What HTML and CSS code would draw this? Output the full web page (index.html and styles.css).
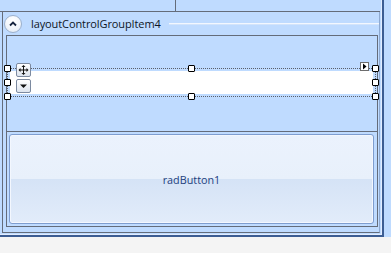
FILE: index.html
```html
<!DOCTYPE html>
<html>
<head>
<meta charset="utf-8">
<link rel="stylesheet" href="styles.css">
</head>
<body>
<div class="form">
  <div class="frame">
    <div class="toprow"><div class="topcell"></div><div class="topcell2"></div></div>
    <div class="root">
      <div class="ghead">
        <div class="collapse">
          <svg width="16" height="16" viewBox="0 0 16 16"><path d="M5 9.5 L8 6.5 L11 9.5" fill="none" stroke="#15243f" stroke-width="1.8"/></svg>
        </div>
        <span class="gtitle">layoutControlGroupItem4</span>
        <div class="gline"></div>
      </div>
      <div class="gbox">
        <div class="sp1"></div>
        <div class="sel">
          <div class="tb"></div>
          <div class="tool move">
            <svg width="13" height="12" viewBox="0 0 13 12"><path d="M6.5 1 L4.5 3 H6 V5.5 H3.5 V4 L1.5 6 L3.5 8 V6.5 H6 V9 H4.5 L6.5 11 L8.5 9 H7 V6.5 H9.5 V8 L11.5 6 L9.5 4 V5.5 H7 V3 H8.5 Z" fill="#111"/></svg>
          </div>
          <div class="tool drop">
            <svg width="13" height="12" viewBox="0 0 13 12"><path d="M3 4.5 H10 L6.5 8 Z" fill="#111"/></svg>
          </div>
          <div class="stag"><svg width="7" height="7" viewBox="0 0 7 7"><path d="M2 0.5 L5.5 3.5 L2 6.5 Z" fill="#000"/></svg></div>
          <div class="h h1"></div><div class="h h2"></div><div class="h h3"></div>
          <div class="h h4"></div><div class="h h5"></div>
          <div class="h h6"></div><div class="h h7"></div><div class="h h8"></div>
        </div>
        <div class="sp2"></div>
        <div class="bitem">
          <div class="btn">radButton1</div>
        </div>
      </div>
    </div>
  </div>
</div>
</body>
</html>
```
FILE: styles.css
```css
html, body {
  margin: 0;
  padding: 0;
}
body {
  background: #f4f4f4;
  width: 391px;
  height: 253px;
  overflow: hidden;
  font-family: "Open Sans", "Noto Sans", sans-serif;
}
.form {
  width: 391px;
  height: 237px;
  background: #bfdbff;
}
.frame {
  width: 382px;
  height: 235px;
  border-right: 2px solid #3c5d93;
  border-bottom: 2px solid #3c5d93;
  box-shadow: inset -1px -1px 0 #e2edff;
}
.toprow {
  display: flex;
  width: 380px;
  height: 11px;
  border-bottom: 1px solid #646c7a;
}
.topcell {
  width: 175px;
  border-right: 1px solid #646c7a;
}
.root {
  margin-left: 2px;
  width: 376px;
  height: 220px;
  border-left: 1px solid #646c7a;
  border-right: 1px solid #8ea9d0;
  border-bottom: 1px solid #646c7a;
}
.ghead {
  display: flex;
  align-items: center;
  height: 23px;
}
.collapse {
  width: 16px;
  height: 16px;
  margin-left: 1px;
  border-radius: 50%;
  border: 1px solid #9cb0cc;
  background: radial-gradient(circle at 50% 30%, #ffffff 0%, #f3f7fc 50%, #dfe7f2 100%);
  display: flex;
  align-items: center;
  justify-content: center;
}
.collapse svg {
  display: block;
  width: 16px;
  height: 16px;
}
.gtitle {
  margin-left: 9px;
  font-size: 11px;
  letter-spacing: -0.1px;
  color: #0e1626;
  line-height: 14px;
  white-space: nowrap;
}
.gline {
  flex: 1;
  margin-left: 8px;
  height: 0;
  border-top: 1px solid #f2f7ff;
  border-bottom: 1px solid #d3e4fb;
}
.gbox {
  margin-left: 3px;
  width: 370px;
  height: 190px;
  border: 1px solid #646c7a;
}
.sp1 {
  height: 32px;
}
.sel {
  position: relative;
  width: 367px;
  height: 27px;
  border: 1px dotted #5a5f6a;
  padding: 0;
}
.tb {
  margin: 2px 2px 0 2px;
  height: 23px;
  background: #ffffff;
}
.tool {
  position: absolute;
  left: 8px;
  width: 13px;
  height: 12px;
  border: 1px solid #7c8aa0;
  border-radius: 2px;
  background: linear-gradient(#ffffff, #dde4ee);
}
.tool svg {
  display: block;
}
.move {
  top: -6px;
}
.drop {
  top: 10px;
}
.stag {
  position: absolute;
  left: 352px;
  top: -7px;
  width: 7px;
  height: 7px;
  border: 1px solid #6d6d6d;
  background: #ffffff;
}
.stag svg {
  display: block;
}
.h {
  position: absolute;
  width: 5px;
  height: 5px;
  border: 1px solid #000;
  border-radius: 1px;
  background: #fff;
}
.h1 { left: -4px; top: -4px; }
.h2 { left: 180px; top: -4px; }
.h3 { left: 364px; top: -4px; }
.h4 { left: -4px; top: 10px; }
.h5 { left: 364px; top: 10px; }
.h6 { left: -4px; top: 24px; }
.h7 { left: 180px; top: 24px; }
.h8 { left: 364px; top: 24px; }
.sp2 {
  height: 34px;
}
.bitem {
  border-top: 1px solid #646c7a;
  padding: 2px 3px 3px 2px;
}
.btn {
  height: 87px;
  border: 1px solid #7e9dcf;
  border-radius: 3px;
  box-shadow: inset 0 0 0 1px #f3f7fe;
  background: linear-gradient(#ebf2fd 0%, #e8f0fb 50%, #d5e3f6 50%, #e2ecfa 100%);
  display: flex;
  align-items: center;
  justify-content: center;
  font-size: 10.8px;
  color: #22407e;
  padding-top: 1px;
  box-sizing: content-box;
}
```
